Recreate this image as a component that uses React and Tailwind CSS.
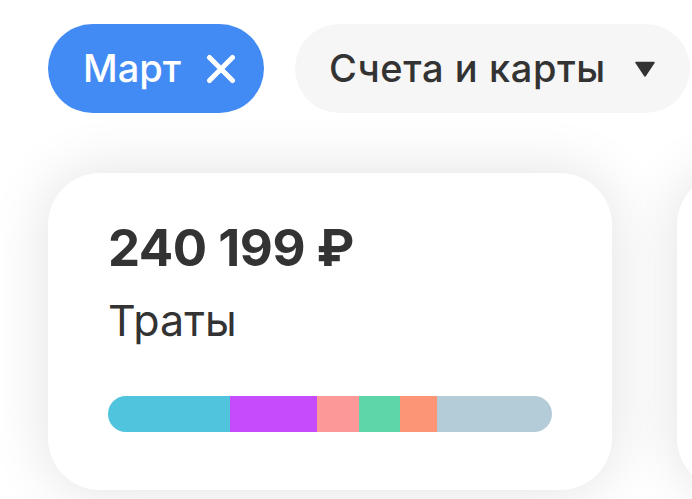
import React from 'react';

const segments = [
    { color: '#4fc4dc', width: 122 },
    { color: '#c54bfc', width: 87 },
    { color: '#fc9898', width: 42 },
    { color: '#5fd5aa', width: 41 },
    { color: '#fc9576', width: 37 },
    { color: '#b4cbd8', width: 115 },
];

const CloseIcon = () => (
    <svg width="30" height="30" viewBox="0 0 30 30" fill="none">
        <path d="M3.5 3.5L26.5 26.5M26.5 3.5L3.5 26.5" stroke="white" strokeWidth="5" strokeLinecap="round" />
    </svg>
);

const Caret = () => (
    <svg width="20" height="16" viewBox="0 0 20 16">
        <path d="M1 1.5H19L10 15Z" fill="#333333" stroke="#333333" strokeWidth="1.5" strokeLinejoin="round" />
    </svg>
);

const SpendCard = () => (
    <div className="w-[564px] h-[317px] shrink-0 rounded-[52px] bg-white shadow-[0_0_60px_rgba(0,0,0,0.12)] pl-[60px] pt-[45px]">
        <div className="text-[51px] leading-[60px] font-bold text-[#333333] tracking-[-0.5px]">240 199 ₽</div>
        <div className="mt-[17px] text-[43px] leading-[50px] text-[#333333]">Траты</div>
        <div className="mt-[51px] flex w-[444px] h-[36px] rounded-full overflow-hidden">
            {segments.map((s, i) => (
                <div key={i} className="h-full" style={{ width: s.width, backgroundColor: s.color }} />
            ))}
        </div>
    </div>
);

export default function App() {
    return (
        <div className="w-[692px] h-[499px] overflow-hidden bg-white font-['Inter',sans-serif] pl-[48px] pt-[24px]">
            <div className="flex gap-[31px]">
                <button className="h-[89px] w-[216px] shrink-0 rounded-full bg-[#428bf4] flex items-center pl-[35px] gap-[25px] text-white text-[38px] font-medium">
                    <span>Март</span>
                    <CloseIcon />
                </button>
                <button className="h-[89px] w-[395px] shrink-0 rounded-full bg-[#f6f6f6] flex items-center pl-[34px] gap-[29px] text-[#333333] text-[38px] font-medium tracking-[0.6px]">
                    <span>Счета и карты</span>
                    <Caret />
                </button>
            </div>
            <div className="mt-[60px] flex gap-[65px]">
                <SpendCard />
                <div className="w-[564px] h-[317px] shrink-0 rounded-[52px] bg-white shadow-[0_0_60px_rgba(0,0,0,0.12)]" />
            </div>
        </div>
    );
}
